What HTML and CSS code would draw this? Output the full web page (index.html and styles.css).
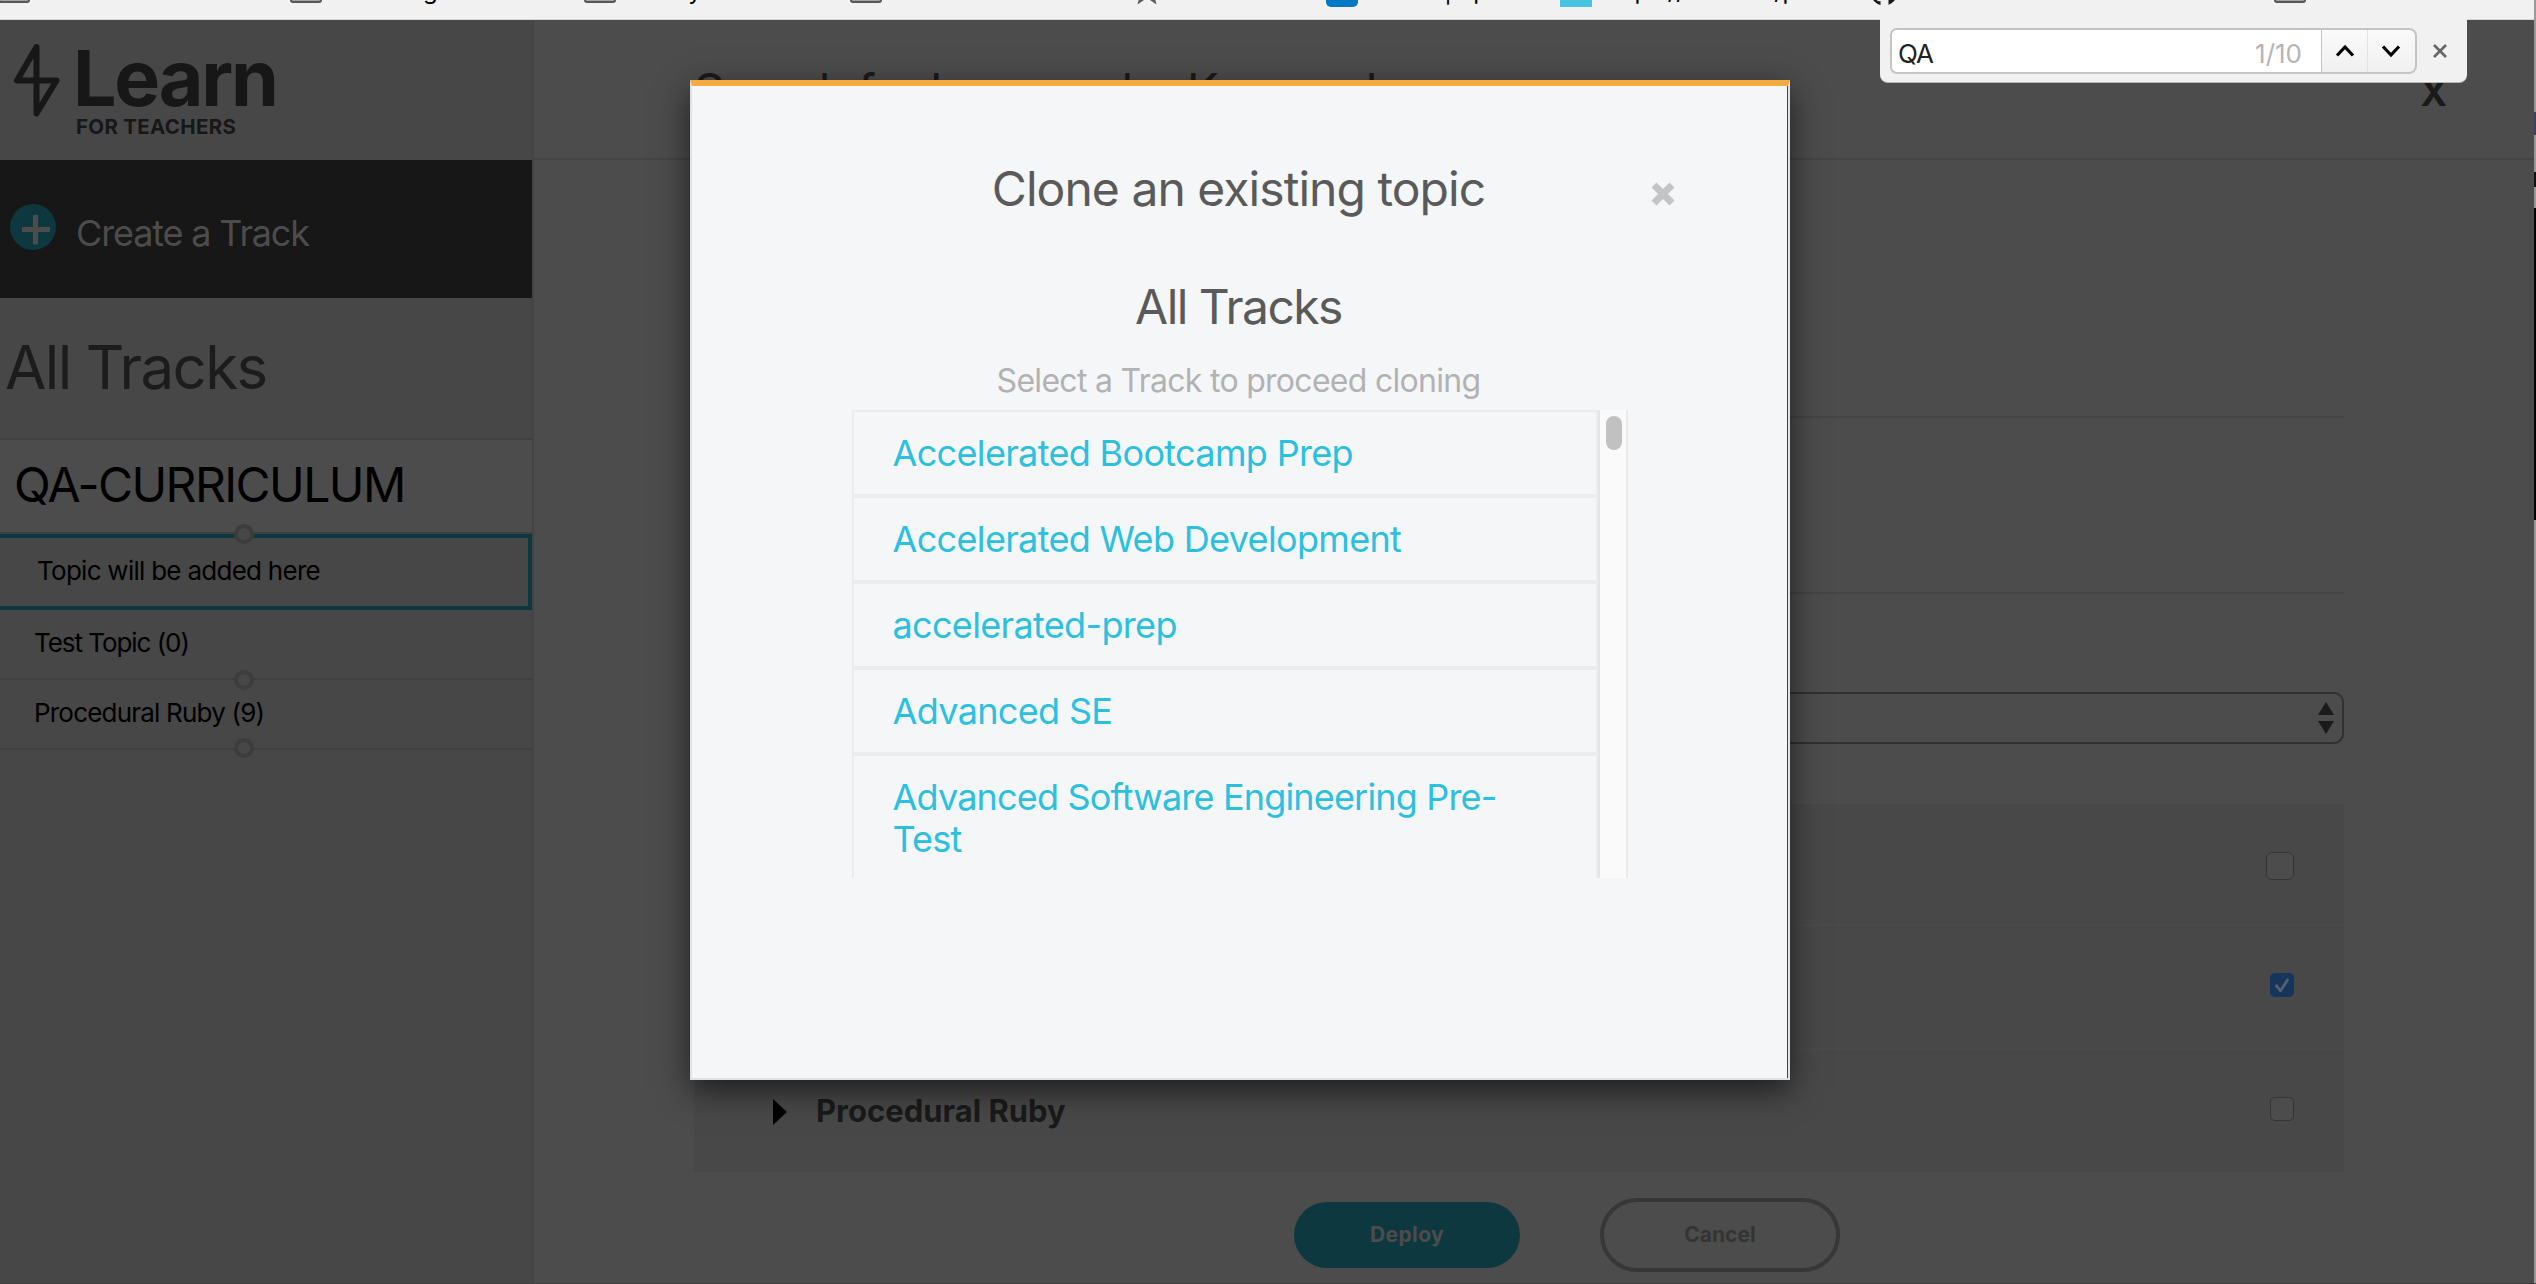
FILE: index.html
```
<!DOCTYPE html>
<html lang="en">
<head>
<meta charset="utf-8">
<title>Learn for Teachers</title>
<link rel="stylesheet" href="styles.css">
</head>
<body>
<div class="bookmarks">
  <div class="bm bm-1"><i class="folder"></i><span>Student Resources</span></div>
  <div class="bm bm-2"><i class="folder"></i><span>Teaching Resources</span></div>
  <div class="bm bm-3"><i class="folder"></i><span>Family Resources</span></div>
  <div class="bm bm-4"><i class="folder"></i><span>Admin Resources</span></div>
  <div class="bm bm-5"><svg class="star" width="32" height="32" viewBox="0 0 32 32"><path d="M16 1l4.200 10.600L31 12l-8.400 7L25.500 30.500 16 24 6.500 30.500 9.400 19 1 12l10.800-.4z" fill="#5c5c5c"/></svg><span>Curriculum</span></div>
  <div class="bm bm-6"><i class="tile tile-blue"></i><span>Board | Sprint tasks</span></div>
  <div class="bm bm-7"><i class="tile tile-cyan"></i><span>https://learn.co/prs</span></div>
  <div class="bm bm-8"><svg class="cat" width="28" height="28" viewBox="0 0 28 28"><circle cx="14" cy="14" r="13.500" fill="#1b1817"/><path d="M10.500 28v-5q-3 1-5-2.500 3 2.500 5 .5V18h8v10z" fill="#f1f1f1"/></svg><span>learn-co-curriculum</span></div>
  <div class="bm bm-9"><i class="folder"></i><span>Other Bookmarks</span></div>
</div>

<div class="app">
  <aside class="sidebar">
    <div class="brand">
      <svg class="bolt" width="48" height="76" viewBox="0 0 48 76"><path d="M23.500 4L4 37.500H43.500L23.500 70.500Z" fill="none" stroke="#171717" stroke-width="6" stroke-linejoin="round"/></svg>
      <div class="brand-text">
        <div class="brand-name">Learn</div>
        <div class="brand-sub">FOR TEACHERS</div>
      </div>
    </div>
    <div class="create">
      <svg width="46" height="46" viewBox="0 0 46 46"><circle cx="23" cy="23" r="23" fill="#0e3840"/><path d="M12 25.500H40M25.500 11V40.500" stroke="#4c4c4c" stroke-width="5"/></svg>
      <span>Create a Track</span>
    </div>
    <div class="heading">All Tracks</div>
    <div class="track">QA-CURRICULUM<i class="dot dot-track"></i></div>
    <div class="topic topic-new">Topic will be added here</div>
    <div class="topic topic-test">Test Topic (0)<i class="dot"></i></div>
    <div class="topic">Procedural Ruby (9)<i class="dot dot-last"></i></div>
  </aside>

  <main class="main">
    <header class="main-head"><h1>Search for Lessons by Keyword</h1><span class="main-close">X</span></header>
    <div class="content">
      <div class="field field-a"></div>
      <div class="field field-b"></div>
      <div class="select"><svg width="16" height="32" viewBox="0 0 16 32"><path d="M8 0l8 13H0zM8 32l8-13H0z" fill="#1a1a1a"/></svg></div>
      <div class="lessons">
        <div class="lesson lesson-first"><i class="check check-lg"></i></div>
        <div class="lesson lesson-mid"><i class="check check-on"><svg width="24" height="24" viewBox="0 0 24 24"><path d="M6.500 12.800l4 5L17.500 7" fill="none" stroke="#5a6069" stroke-width="2.800" stroke-linecap="round" stroke-linejoin="round"/></svg></i></div>
        <div class="lesson lesson-end"><svg width="14" height="26" viewBox="0 0 14 26"><path d="M0 0L14 13 0 26z"/></svg><span>Procedural Ruby</span><i class="check"></i></div>
      </div>
      <div class="actions"><span class="btn deploy">Deploy</span><span class="btn cancel">Cancel</span></div>
    </div>
  </main>
  <div class="edge"></div>
</div>

<section class="modal">
  <div class="modal-head"><h2>Clone an existing topic</h2><svg width="24" height="24" viewBox="0 0 24 24"><path d="M3 3L21 21M21 3L3 21" stroke="#c4c4c6" stroke-width="7"/></svg></div>
  <h2 class="modal-title">All Tracks</h2>
  <p class="modal-sub">Select a Track to proceed cloning</p>
  <div class="picker">
    <div class="list">
      <div class="item">Accelerated Bootcamp Prep</div>
      <div class="item">Accelerated Web Development</div>
      <div class="item">accelerated-prep</div>
      <div class="item">Advanced SE</div>
      <div class="item item-long">Advanced Software Engineering Pre-Test</div>
    </div>
    <div class="scroll"><i></i></div>
  </div>
</section>

<div class="find">
  <div class="find-box"><span class="find-q">QA</span><span class="find-n">1/10</span></div>
  <div class="find-btns">
    <span><svg width="20" height="14" viewBox="0 0 20 14"><path d="M2 11.500L10 3l8 8.500" fill="none" stroke="#000" stroke-width="3.200"/></svg></span>
    <span><svg width="20" height="14" viewBox="0 0 20 14"><path d="M2 2.500L10 11l8-8.500" fill="none" stroke="#000" stroke-width="3.200"/></svg></span>
  </div>
  <svg class="find-x" width="16" height="16" viewBox="0 0 16 16"><path d="M2 2L14 14M14 2L2 14" stroke="#666" stroke-width="2.600"/></svg>
</div>
</body>
</html>
```
FILE: styles.css
```
* { box-sizing: border-box; }
html, body { margin: 0; height: 1284px; overflow: hidden; }
body { position: relative; width: 2536px; background: #4c4c4c; font-family: Inter, "Liberation Sans", sans-serif; color: #000; }
h1, h2, p { margin: 0; font-weight: 400; }
svg { display: block; flex: none; }
i { font-style: normal; }

/* bookmarks strip, scrolled so that only its lower edge shows */
.bookmarks { display: flex; height: 20px; background: #f1f1f1; border-bottom: 1px solid #d3d8d5; overflow: hidden; }
.bm { display: flex; flex: none; align-items: flex-start; gap: 14px; font-size: 24px; line-height: 28px; white-space: nowrap; }
.bm span { margin-top: -23px; letter-spacing: -.3px; }
.bm-1 { width: 292px; margin-left: -2px; }
.bm-2 { width: 294px; }
.bm-3 { width: 266px; }
.bm-4 { width: 282px; }
.bm-5 { width: 194px; }
.bm-6 { width: 234px; }
.bm-7 { width: 310px; }
.bm-8 { width: 404px; }
.bm-9 { width: 262px; }
.folder { flex: none; width: 32px; height: 24px; margin-top: -21px; border: 2px solid #585858; background: #a5a5a5; border-radius: 3px; }
.star { margin: -26px -2px 0 -1px; }
.tile { flex: none; width: 32px; height: 32px; }
.tile-blue { margin-top: -25px; background: #0079c4; border-radius: 5px; }
.tile-cyan { margin-top: -25px; background: #48c4e0; }
.cat { margin-top: -22px; }

.app { display: flex; height: 1264px; border-bottom: 1px solid #444042; }
.sidebar { width: 534px; flex: none; background: #474747; border-right: 2px solid #444; }
.brand { display: flex; height: 140px; padding: 23px 0 0 13px; gap: 12px; color: #171717; font-weight: 700; }
.brand-name { margin: 5px 0 0; font-size: 77px; line-height: 60px; letter-spacing: -2.200px; }
.brand-sub { margin: 7px 0 0 3px; font-size: 20.500px; line-height: 24px; letter-spacing: .3px; }
.create { display: flex; height: 138px; padding: 44px 0 0 10px; gap: 20px; background: #171717; color: #4c4c4c; font-size: 36px; line-height: 50px; letter-spacing: -1.150px; }
.create span { margin-top: 4px; }
.heading { height: 142px; padding: 33px 0 0 5px; border-bottom: 2px solid #3f3f3f; color: #1c1c1c; font-size: 60px; line-height: 72px; letter-spacing: -1.620px; }
.track { position: relative; height: 94px; padding: 14px 0 0 14px; background: #4c4c4c; border-bottom: 2px solid #3f3f3f; font-size: 48px; line-height: 61px; letter-spacing: -1.560px; }
.topic { position: relative; height: 70px; padding: 14px 0 0 34px; border-bottom: 2px solid #3f3f3f; font-size: 26px; line-height: 37px; letter-spacing: -.8px; }
.topic-test { letter-spacing: -1.050px; }
.topic-new { height: 76px; padding: 14px 0 0 37px; border: 4px solid #0e3840; border-left: 0; letter-spacing: -.730px; }
.dot { position: absolute; z-index: 1; left: 234px; bottom: -12px; width: 20px; height: 20px; border: 4px solid #3d3d3d; border-radius: 50%; background: #474747; }
.dot-last { bottom: -10px; }

.main { flex: 1; }
.main-head { display: flex; justify-content: space-between; height: 140px; padding: 42px 88px 0 160px; border-bottom: 2px solid #444; color: #1a1a1a; }
.main-head h1 { font-size: 48px; line-height: 58px; letter-spacing: -1.250px; }
.main-close { margin-top: 8px; font-size: 36px; line-height: 46px; font-weight: 700; letter-spacing: -1px; }
.content { width: 1650px; margin-left: 160px; }
.field { border-bottom: 2px solid #444; }
.field-a { height: 258px; }
.field-b { height: 176px; }
.select { display: flex; align-items: center; justify-content: flex-end; height: 52px; margin-top: 98px; padding-right: 8px; border: 2px solid #303030; border-radius: 10px; }
.lessons { display: grid; grid-template-rows: 120px 122px 122px; gap: 2px; margin-top: 60px; background: #4a4a4a; }
.lesson { display: flex; align-items: center; padding: 0 50px 0 79px; background: #484848; color: #1a1a1a; font-size: 31px; font-weight: 700; }
.lesson-first { padding-top: 4px; }
.lesson-mid { padding-bottom: 4px; }
.lesson-end .check { margin-bottom: 4px; }
.lesson-end svg { margin-top: 2px; }
.lesson-end span { margin: -2px 0 0 29px; }
.check { width: 24px; height: 24px; margin-left: auto; border: 1px solid #353535; border-radius: 5px; background: #4c4c4c; }
.check-lg { width: 28px; height: 28px; border-radius: 6px; }
.check-on { border: 0; background: #15355c; }
.actions { display: flex; align-items: center; gap: 80px; margin: 26px 0 0 600px; height: 74px; }
.btn { display: flex; align-items: center; justify-content: center; font-size: 21px; font-weight: 700; padding-bottom: 1px; }
.deploy { width: 226px; height: 66px; border-radius: 33px; background: #0e3840; color: #4c4c4c; letter-spacing: .400px; }
.cancel { width: 240px; height: 74px; border: 4px solid #373737; border-radius: 37px; color: #343434; }

/* sliver of the window behind, at the right edge */
.edge { width: 2px; margin-top: -20px; background: linear-gradient(#999 0 112px, #3b4160 112px 135px, #999 135px 172px, #111 172px 187px, #999 187px 208px, #000 208px 520px, #999 520px); }

.modal { position: absolute; z-index: 2; left: 690px; top: 80px; width: 1100px; height: 1000px; padding: 74px 3px 0 0; border: 2px solid #e0e2e4; border-top: 6px solid #f5ab41; background: #f5f6f8; box-shadow: inset -1px 0 #454545, 0 10px 30px rgba(0,0,0,.6); color: #5a5a5a; text-align: center; }
.modal-head { display: grid; grid-template-columns: 1fr auto 1fr; height: 58px; }
.modal-head h2 { grid-column: 2; font-size: 48px; line-height: 58px; letter-spacing: -.950px; }
.modal-head svg { margin: 22px 0 0 166px; }
.modal-title { margin-top: 60px; font-size: 48px; line-height: 58px; letter-spacing: -1.550px; }
.modal-sub { margin-top: 25px; color: #b2b2b2; font-size: 32px; line-height: 40px; letter-spacing: -.710px; }
.picker { display: flex; width: 776px; height: 468px; margin: 9px 0 0 160px; overflow: hidden; }
.list { width: 748px; border-right: 2px solid #e5e5e5; }
.item { padding: 20px 60px 20px 38.500px; border: 2px solid #ececec; color: #2cc0e0; font-size: 36px; line-height: 42px; letter-spacing: -.660px; text-align: left; }
.item-long { letter-spacing: -.820px; }
.scroll { width: 28px; padding: 6px; border-right: 2px solid #ebebeb; background: #fafafa; }
.scroll i { display: block; width: 16px; height: 34px; border-radius: 8px; background: #c1c1c1; }

.find { position: absolute; z-index: 3; left: 1880px; top: 19px; display: flex; width: 587px; height: 64px; padding: 9px 0 0 10px; background: #f1f1f1; border-bottom: 1px solid #b5b5b5; border-radius: 0 0 8px 8px; }
.find-box { display: flex; justify-content: space-between; width: 432px; height: 46px; padding: 0 19px 0 6px; border: 2px solid #c4c4c4; border-right-width: 1px; border-radius: 7px 0 0 7px; background: #fff; font-size: 26px; line-height: 47px; }
.find-q { letter-spacing: -1px; color: #222; }
.find-n { color: #b5b5b5; }
.find-btns { display: flex; width: 95px; height: 46px; padding-right: 2px; border: 2px solid #c4c4c4; border-left: 0; border-radius: 0 8px 8px 0; background: linear-gradient(#fafafa, #f0f0f0); }
.find-btns span { flex: 1; display: flex; align-items: center; justify-content: center; }
.find-btns span + span { border-left: 1px solid #e2e2e2; }
.find-x { margin: 15px 0 0 15px; }
```
